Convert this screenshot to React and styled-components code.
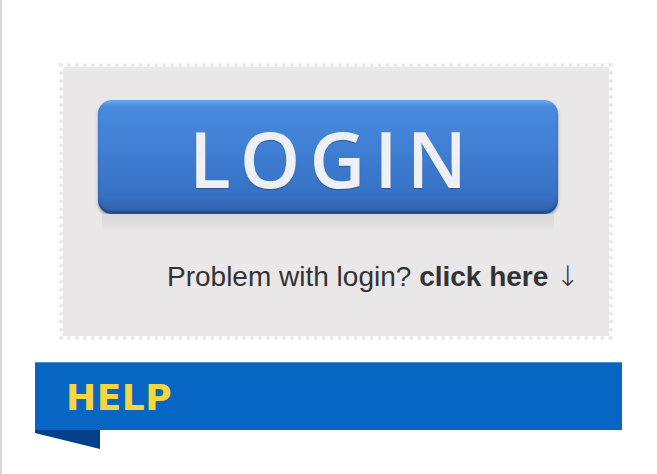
import React from 'react';
import styled, { createGlobalStyle } from 'styled-components';

const GlobalStyle = createGlobalStyle`
    html, body {
        margin: 0;
        padding: 0;
        background: #ffffff;
    }
`;

const Page = styled.div`
    box-sizing: border-box;
    width: 657px;
    height: 474px;
    border-left: 2px solid #d9d9d9;
    display: flex;
    flex-direction: column;
    overflow: hidden;
`;

const Panel = styled.div`
    box-sizing: border-box;
    margin: 63px 0 0 57px;
    width: 554px;
    height: 277px;
    border: 4px dotted #e9e7e8;
    background: #e9e7e8;
    background-clip: padding-box;
    padding: 33px 0 0 35px;
    display: flex;
    flex-direction: column;
`;

const LoginButton = styled.button`
    box-sizing: border-box;
    width: 460px;
    height: 114px;
    border: none;
    border-radius: 14px;
    background: linear-gradient(
        #66a6f0 0%,
        #4a8ade 6%,
        #3f7ed3 45%,
        #3670c2 85%,
        #2d5fa8 100%
    );
    box-shadow: inset 0 -3px 2px rgba(20, 50, 100, 0.45),
        0 2px 3px rgba(0, 0, 0, 0.35);
    color: #eef0f4;
    font-family: 'Open Sans', 'DejaVu Sans', sans-serif;
    font-size: 77px;
    font-weight: 600;
    letter-spacing: 9px;
    padding: 2px 0 0 9px;
    line-height: 1;
    text-shadow: 0 1px 1px rgba(0, 0, 0, 0.25);
    cursor: pointer;
`;

const Reflection = styled.div`
    width: 452px;
    height: 18px;
    margin-left: 4px;
    background: linear-gradient(#d9d8da, #e2e1e2 70%, #e9e7e8);
`;

const Problem = styled.p`
    margin: 31px 0 0 69px;
    font-family: 'Liberation Sans', Arial, sans-serif;
    font-size: 28px;
    color: #333333;
    line-height: 1;

    b {
        font-weight: 700;
    }
`;

const Arrow = styled.span`
    font-family: 'DejaVu Sans', sans-serif;
    font-weight: 300;
    color: #333333;
`;

const Banner = styled.div`
    margin: 22px 0 0 33px;
    width: 587px;
    display: flex;
    flex-direction: column;
`;

const BannerBar = styled.div`
    box-sizing: border-box;
    height: 68px;
    background: #0766c4;
    border-top: 1px solid #4a8ed6;
    display: flex;
    align-items: center;
    padding: 3px 0 0 31px;
`;

const BannerTitle = styled.h2`
    margin: 0;
    font-family: 'DejaVu Sans', Verdana, sans-serif;
    font-weight: 700;
    font-size: 36px;
    letter-spacing: 0.5px;
    color: #f6d63c;
    line-height: 1;
`;

const Fold = styled.svg`
    display: block;
    width: 65px;
    height: 19px;
`;

export default function App() {
    return (
        <>
            <GlobalStyle />
            <Page>
                <Panel>
                    <LoginButton>LOGIN</LoginButton>
                    <Reflection />
                    <Problem>
                        Problem with login? <b>click here</b> <Arrow>↓</Arrow>
                    </Problem>
                </Panel>
                <Banner>
                    <BannerBar>
                        <BannerTitle>HELP</BannerTitle>
                    </BannerBar>
                    <Fold viewBox="0 0 65 19">
                        <polygon points="0,0 65,0 65,19 0,3" fill="#04408a" />
                    </Fold>
                </Banner>
            </Page>
        </>
    );
}
